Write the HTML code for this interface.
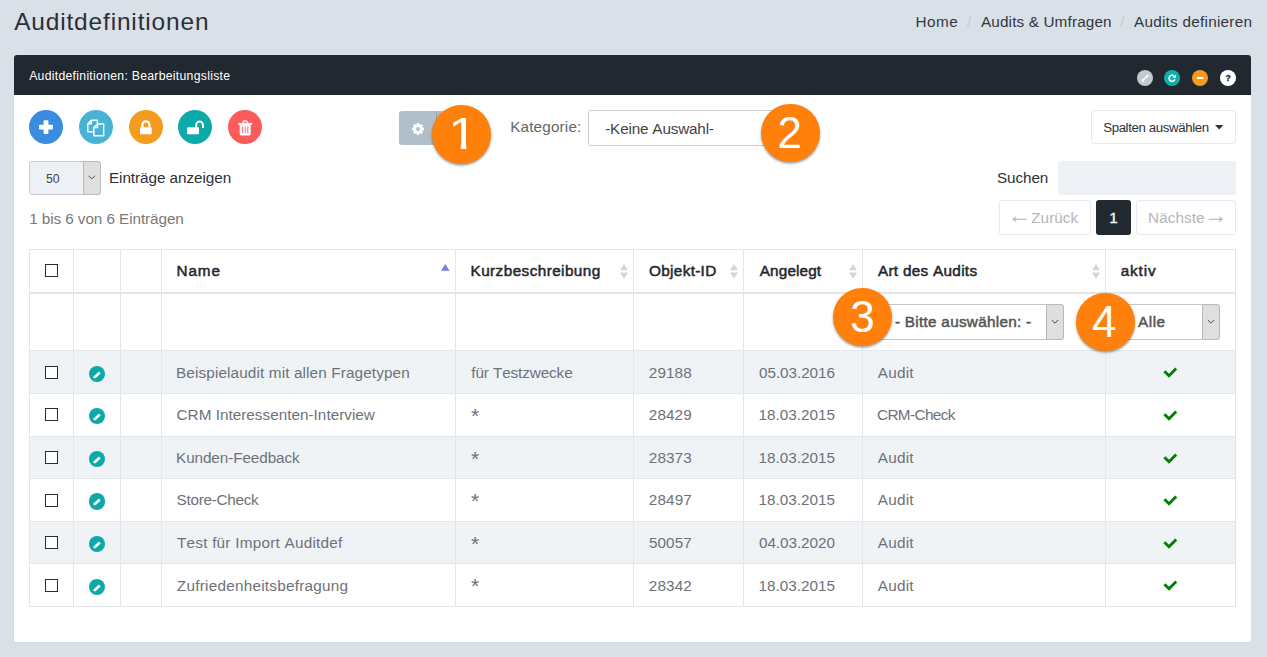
<!DOCTYPE html>
<html lang="de">
<head>
<meta charset="utf-8">
<title>Auditdefinitionen</title>
<style>
*{box-sizing:border-box;margin:0;padding:0}
html,body{width:1267px;height:657px;overflow:hidden}
body{background:#dae0e8;font-family:"Liberation Sans",sans-serif;font-size:15px;color:#333;position:relative}
.abs{position:absolute;white-space:nowrap;font-weight:400;font-kerning:none}
.page-title{color:#2b2f37}
.breadcrumb{position:absolute;left:0;top:0;width:1267px;height:45px;color:#33373e;list-style:none}
.breadcrumb .sep{color:#c2c9d3}
.portlet{position:absolute;left:14px;top:55px;width:1237px;height:587px;background:#fff;border-radius:3px}
.portlet-heading{position:absolute;left:0;top:0;width:1237px;height:39.5px;background:#222830;border-radius:3px 3px 0 0;color:#fff}
.pw{position:absolute;top:14.7px;width:16.2px;height:16.2px;border-radius:50%}
.cbtn{position:absolute;top:55px;width:34px;height:34px;border-radius:50%}
svg{position:absolute;left:0;top:0;overflow:visible}
.num{position:absolute;width:58.4px;height:58.4px;border-radius:50%;background:#ff800a;color:#fff;box-shadow:0 1.5px 2.5px rgba(0,0,0,.4);z-index:5}
.gearbtn{position:absolute;left:385px;top:56px;width:62px;height:34px;background:#b1bfca;border-radius:3px}
.gearbtn i{position:absolute;left:37px;top:0;width:1px;height:34px;background:#93a3b0}
.selbox{position:absolute;background:#fff;border:1px solid #ccc;border-radius:3px}
.ddbtn{position:absolute;background:#dfdfdf;border:1px solid #b9b9b9;border-radius:0 3px 3px 0}
.btn{position:absolute;background:#fff;border:1px solid #e6e8eb;border-radius:3px}
.search{position:absolute;left:1044px;top:106px;width:178px;height:33.5px;background:#edf0f5;border-radius:3px}
.lensel{position:absolute;left:15px;top:106px;width:71.5px;height:33.5px;background:#edf0f5;border:1px solid #c8ccd2;border-radius:3px}
.pg1{position:absolute;left:1082px;top:145px;width:35px;height:35px;background:#222830;border-radius:3px;color:#fff}
table.dt{position:absolute;left:15px;top:194px;border-collapse:separate;border-spacing:0;table-layout:fixed;width:1207px;border-right:1px solid #e3e6ea;border-bottom:1px solid #e3e6ea}
table.dt th,table.dt td{border-left:1px solid #e3e6ea;border-top:1px solid #e3e6ea;position:relative;padding:0;text-align:left;font-weight:400}
table.dt thead tr.h th{height:43px;color:#23272e}
table.dt thead tr.f th{height:58.4px;border-top:2px solid #e1e6ec}
table.dt tbody td{height:42.6px;color:#6d727a}
table.dt tbody tr.odd td{background:#f0f3f5}
.cb{position:absolute;left:15px;width:13px;height:13px;border:1px solid #2b2b2b;background:#fff}
.ed{position:absolute;left:15px;width:16.2px;height:16.2px;border-radius:50%;background:#0da8a8}
</style>
</head>
<body>
<h1 class="abs page-title" style="left:14.15px;top:6.82px;font-size:24.48px;line-height:30px;letter-spacing:0.839px;">Auditdefinitionen</h1>
<ol class="breadcrumb"><li><span class="abs" style="left:915.54px;top:12.00px;font-size:15.3px;line-height:20px;letter-spacing:0.441px;">Home</span></li><li><span class="abs sep" style="left:967.00px;top:12.00px;font-size:15.3px;line-height:20px;letter-spacing:0px;">/</span><span class="abs" style="left:980.97px;top:12.00px;font-size:15.3px;line-height:20px;letter-spacing:0.139px;">Audits &amp; Umfragen</span></li><li><span class="abs sep" style="left:1120.00px;top:12.00px;font-size:15.3px;line-height:20px;letter-spacing:0px;">/</span><span class="abs" style="left:1133.97px;top:12.00px;font-size:15.3px;line-height:20px;letter-spacing:0.253px;">Audits definieren</span></li></ol>
<section class="portlet">
<header class="portlet-heading"><h3 class="abs" style="left:15.18px;top:10.76px;font-size:12.24px;line-height:20px;letter-spacing:0.279px;">Auditdefinitionen: Bearbeitungsliste</h3><a class="pw" style="left:1122.9px;background:#c2c9d0"><svg width="16.2" height="16.2" viewBox="0 0 16.2 16.2" style=""><path d="M5.400 10.800L10.800 5.400" stroke="#fff" stroke-width="1.400"/><path d="M8.500 4.800h2.900v2.900zM4.800 8.500v2.900h2.900z" fill="#fff"/></svg></a><a class="pw" style="left:1149.9px;background:#0fb0ac"><svg width="16.2" height="16.2" viewBox="0 0 16.2 16.2" style=""><path d="M10.900 9.200a3 3 0 1 1-.9-3.200" fill="none" stroke="#fff" stroke-width="1.600"/><path d="M11.900 4.400v3.400h-3.400z" fill="#fff"/></svg></a><a class="pw" style="left:1177.9px;background:#f39c1f"><svg width="16.2" height="16.2" viewBox="0 0 16.2 16.2" style=""><rect x="4.800" y="7.100" width="6.600" height="2" rx=".6" fill="#fff"/></svg></a><a class="pw" style="left:1205.9px;background:#fff"><span class="abs" style="left:0;width:16.2px;text-align:center;top:0;line-height:16.2px;font-size:8.5px;font-weight:700;color:#1b2027;-webkit-text-stroke:.3px">?</span></a></header>
<div class="toolbar"><a class="cbtn" title="Neu" style="left:15px;background:#3a8ce0"><svg width="34" height="34" viewBox="0 0 34 34" style=""><path d="M15.4 10.3h3.200a.8.8 0 0 1 .8.8v3.700h3.800a.8.8 0 0 1 .8.8v3.200a.8.8 0 0 1-.8.8h-3.800v3.700a.8.8 0 0 1-.8.8h-3.200a.8.8 0 0 1-.8-.8v-3.700h-3.800a.8.8 0 0 1-.8-.8v-3.200a.8.8 0 0 1 .8-.8h3.800v-3.700a.8.8 0 0 1 .8-.8z" fill="#fff"/></svg></a><a class="cbtn" title="Kopieren" style="left:65px;background:#49b3d7"><svg width="34" height="34" viewBox="0 0 34 34" style=""><g fill="none" stroke="#fff" stroke-width="1.400" stroke-linejoin="round"><path d="M12.400 10.200h6v11.600h-9.600v-8z"/><path d="M12.400 10.200v3.600h-3.600"/><path d="M18.500 14h6.200v11.800h-9.800v-8.200z" fill="#49b3d7"/><path d="M18.500 14v3.600h-3.600"/></g></svg></a><a class="cbtn" title="Sperren" style="left:115px;background:#f39c1f"><svg width="34" height="34" viewBox="0 0 34 34" style=""><rect x="11" y="17.300" width="11.700" height="7" rx=".8" fill="#fff"/><path d="M13.400 17.600v-2.800a3.500 3.500 0 0 1 7 0v2.800" fill="none" stroke="#fff" stroke-width="2.2"/></svg></a><a class="cbtn" title="Entsperren" style="left:164px;background:#0daaa9"><svg width="34" height="34" viewBox="0 0 34 34" style=""><rect x="9.100" y="17.300" width="11.900" height="7" rx=".8" fill="#fff"/><path d="M18.200 17.600v-2.600a3.400 3.400 0 0 1 6.800 0v3" fill="none" stroke="#fff" stroke-width="2"/></svg></a><a class="cbtn" title="Löschen" style="left:214px;background:#fb5b5b"><svg width="34" height="34" viewBox="0 0 34 34" style=""><path d="M10.700 13.300h13v1.300h-13z M15 13.300v-1.600a.9.9 0 0 1 .9-.9h2.600a.9.9 0 0 1 .9.9v1.600" fill="#fff" stroke="#fff" stroke-width=".9" stroke-linejoin="round"/><path d="M11.700 14.600h11v9.400a1.400 1.400 0 0 1-1.400 1.400h-8.200a1.400 1.400 0 0 1-1.400-1.400z" fill="#fff"/><g stroke="#fb5b5b" stroke-width=".9"><path d="M14.600 16.300v7M17.200 16.300v7M19.800 16.300v7"/></g><rect x="15.900" y="11.600" width="2.600" height="1.300" fill="#fb5b5b"/></svg></a><div class="gearbtn"><svg width="62" height="34" viewBox="0 0 62 34" style=""><path d="M24.99 16.86 L24.99 19.14 L23.75 19.14 L23.16 20.55 L24.05 21.43 L22.43 23.05 L21.55 22.16 L20.14 22.75 L20.14 23.99 L17.86 23.99 L17.86 22.75 L16.45 22.16 L15.57 23.05 L13.95 21.43 L14.84 20.55 L14.25 19.14 L13.01 19.14 L13.01 16.86 L14.25 16.86 L14.84 15.45 L13.95 14.57 L15.57 12.95 L16.45 13.84 L17.86 13.25 L17.86 12.01 L20.14 12.01 L20.14 13.25 L21.55 13.84 L22.43 12.95 L24.05 14.57 L23.16 15.45 L23.75 16.86Z" fill="#fff"/><circle cx="19" cy="18" r="2.01" fill="#b1bfca"/></svg><i></i></div><label><span class="abs" style="left:496.14px;top:61.70px;font-size:15.3px;line-height:20px;letter-spacing:0.167px;color:#666;">Kategorie:</span></label><div class="selbox" style="left:574px;top:55px;width:215px;height:36px"><span class="abs" style="left:16.22px;top:8.40px;font-size:15.3px;line-height:20px;letter-spacing:-0.189px;color:#444;">-Keine Auswahl-</span></div><div class="btn" style="left:1077px;top:55px;width:145px;height:34px"><span class="abs" style="left:11.20px;top:7.11px;font-size:13.26px;line-height:20px;letter-spacing:-0.381px;color:#2d3138;">Spalten auswählen</span><svg width="9" height="5" viewBox="0 0 9 5" style="left:122.79999999999995px;top:13.799999999999997px"><path d="M0 0h8.400L4.200 4.500z" fill="#2d3138"/></svg></div></div>
<div class="lensel"><span class="abs" style="left:16.01px;top:6.76px;font-size:12.24px;line-height:20px;letter-spacing:0.054px;color:#444;">50</span><span class="ddbtn" style="left:53px;top:-1px;width:17.5px;height:33.5px"><svg width="15.5" height="31.5" viewBox="0 0 15.5 31.5" style=""><path d="M4.5 13.8L7.8 16.9L10.9 13.8" fill="none" stroke="#4a4a4a" stroke-width="1"/></svg></span></div><label class="abs" style="left:94.94px;top:113.20px;font-size:15.3px;line-height:20px;letter-spacing:-0.062px;color:#2d3138;">Einträge anzeigen</label><label class="abs" style="left:983.01px;top:113.00px;font-size:15.3px;line-height:20px;letter-spacing:-0.101px;color:#2d3138;">Suchen</label><div class="search"></div>
<div class="abs" style="left:15.23px;top:153.60px;font-size:15.3px;line-height:20px;letter-spacing:-0.084px;color:#797979;">1 bis 6 von 6 Einträgen</div><div class="btn" style="left:985px;top:145px;width:91.5px;height:34.5px"><span class="abs" style="left:7.57px;top:3.90px;font-size:23.664px;line-height:20px;letter-spacing:0px;color:#b5b5b5;">←</span><span class="abs" style="left:31.21px;top:6.60px;font-size:15.3px;line-height:20px;letter-spacing:0.041px;color:#b5b5b5;">Zurück</span></div><div class="pg1"><span class="abs" style="left:13.33px;top:7.60px;font-size:15.3px;line-height:20px;letter-spacing:0px;color:#fff;-webkit-text-stroke:.3px;">1</span></div><div class="btn" style="left:1122px;top:145px;width:100px;height:34.5px"><span class="abs" style="left:11.04px;top:6.60px;font-size:15.3px;line-height:20px;letter-spacing:0.068px;color:#b5b5b5;">Nächste</span><span class="abs" style="left:66.87px;top:3.90px;font-size:23.664px;line-height:20px;letter-spacing:0px;color:#b5b5b5;">→</span></div>
<div class="num" style="left:418.3px;top:50.2px"><span class="abs" style="left:18.55px;top:3.75px;font-size:44px;line-height:50px;clip-path:polygon(0 0,25px 0,25px 35.4px,15.3px 35.4px,15.3px 41px,10.700px 41px,10.700px 35.4px,0 35.4px);transform:scaleX(1.2);transform-origin:15.2px 0">1</span></div><div class="num" style="left:747.4px;top:49.0px"><span class="abs" style="left:16.16px;top:3.95px;font-size:44px;line-height:50px">2</span></div><div class="num" style="left:819.3px;top:232.9px"><span class="abs" style="left:16.84px;top:4.15px;font-size:44px;line-height:50px">3</span></div><div class="num" style="left:1062.4px;top:238.1px"><span class="abs" style="left:15.70px;top:3.45px;font-size:44px;line-height:50px">4</span></div>
<table class="dt"><colgroup><col style="width:44px"><col style="width:47px"><col style="width:41px"><col style="width:294px"><col style="width:178px"><col style="width:110px"><col style="width:119px"><col style="width:243px"><col style="width:130px"></colgroup>
<thead><tr class="h"><th><span class="cb" style="top:14px"></span></th><th></th><th></th><th><span class="abs" style="left:14.44px;top:11.40px;font-size:15.3px;line-height:20px;letter-spacing:0.941px;-webkit-text-stroke:.5px;">Name</span><svg width="9" height="7" viewBox="0 0 9 7" style="left:279px;top:14.399999999999977px"><path d="M4.300 0L8.600 6.800H0z" fill="#7b7fd8"/></svg></th><th><span class="abs" style="left:14.54px;top:11.40px;font-size:15.3px;line-height:20px;letter-spacing:0.428px;-webkit-text-stroke:.5px;">Kurzbeschreibung</span><svg width="8" height="15" viewBox="0 0 8 15" style="left:163.5px;top:14.199999999999989px"><path d="M4 0L8 6.300H0z" fill="#d3d5d8"/><path d="M0 8.500h8L4 14.800z" fill="#d3d5d8"/></svg></th><th><span class="abs" style="left:15.08px;top:11.40px;font-size:15.3px;line-height:20px;letter-spacing:0.318px;-webkit-text-stroke:.5px;">Objekt-ID</span><svg width="8" height="15" viewBox="0 0 8 15" style="left:95.5px;top:14.199999999999989px"><path d="M4 0L8 6.300H0z" fill="#d3d5d8"/><path d="M0 8.500h8L4 14.800z" fill="#d3d5d8"/></svg></th><th><span class="abs" style="left:15.77px;top:11.40px;font-size:15.3px;line-height:20px;letter-spacing:0.134px;-webkit-text-stroke:.5px;">Angelegt</span><svg width="8" height="15" viewBox="0 0 8 15" style="left:104.5px;top:14.199999999999989px"><path d="M4 0L8 6.300H0z" fill="#d3d5d8"/><path d="M0 8.500h8L4 14.800z" fill="#d3d5d8"/></svg></th><th><span class="abs" style="left:14.97px;top:11.40px;font-size:15.3px;line-height:20px;letter-spacing:0.295px;-webkit-text-stroke:.5px;">Art des Audits</span><svg width="8" height="15" viewBox="0 0 8 15" style="left:228.5px;top:14.199999999999989px"><path d="M4 0L8 6.300H0z" fill="#d3d5d8"/><path d="M0 8.500h8L4 14.800z" fill="#d3d5d8"/></svg></th><th><span class="abs" style="left:14.65px;top:11.40px;font-size:15.3px;line-height:20px;letter-spacing:0.886px;-webkit-text-stroke:.5px;">aktiv</span></th></tr>
<tr class="f"><th></th><th></th><th></th><th></th><th></th><th></th><th></th><th><div class="selbox" style="left:10px;top:10px;width:191px;height:36px;border-color:#c6c6c6"><span class="abs" style="left:20.92px;top:7.30px;font-size:15.3px;line-height:20px;letter-spacing:0.279px;-webkit-text-stroke:.5px;color:#555;">- Bitte auswählen: -</span><span class="ddbtn" style="left:172px;top:-1px;width:18px;height:36px"><svg width="16" height="34" viewBox="0 0 16 34" style=""><path d="M4.8 15.0L8.0 18.2L11.2 15.0" fill="none" stroke="#4a4a4a" stroke-width="1"/></svg></span></div></th><th><div class="selbox" style="left:14px;top:10px;width:100px;height:36px;border-color:#c6c6c6"><span class="abs" style="left:16.97px;top:7.30px;font-size:15.3px;line-height:20px;letter-spacing:0.532px;-webkit-text-stroke:.5px;color:#555;">Alle</span><span class="ddbtn" style="left:81px;top:-1px;width:18px;height:36px"><svg width="16" height="34" viewBox="0 0 16 34" style=""><path d="M4.8 15.0L8.0 18.2L11.2 15.0" fill="none" stroke="#4a4a4a" stroke-width="1"/></svg></span></div></th></tr></thead>
<tbody><tr class="odd"><td><span class="cb" style="top:14.5px"></span></td><td><a class="ed" style="left:14.8px;top:14.3px"><svg width="16.2" height="16.2" viewBox="0 0 16.2 16.2" style=""><path d="M5.300 11.400L10.800 6.400" stroke="#fff" stroke-width="2.700"/><path d="M4.400 12.300l.4-2 1.600 1.700z" fill="#fff"/></svg></a></td><td></td><td><span class="abs" style="left:14.04px;top:11.30px;font-size:15.3px;line-height:20px;letter-spacing:0.125px;">Beispielaudit mit allen Fragetypen</span></td><td><span class="abs" style="left:15.28px;top:11.30px;font-size:15.3px;line-height:20px;letter-spacing:-0.114px;">für Testzwecke</span></td><td><span class="abs" style="left:14.83px;top:11.30px;font-size:15.3px;line-height:20px;letter-spacing:0.072px;">29188</span></td><td><span class="abs" style="left:15.00px;top:11.30px;font-size:15.3px;line-height:20px;letter-spacing:-0.067px;">05.03.2016</span></td><td><span class="abs" style="left:14.77px;top:11.30px;font-size:15.3px;line-height:20px;letter-spacing:0.242px;">Audit</span></td><td><svg width="16" height="12" viewBox="0 0 16 12" style="left:57.4px;top:15.0px"><path d="M1.400 5.300L6 9.800L13.200 2.400" fill="none" stroke="#008000" stroke-width="2.900"/></svg></td></tr>
<tr class="even"><td><span class="cb" style="top:14.5px"></span></td><td><a class="ed" style="left:14.8px;top:14.3px"><svg width="16.2" height="16.2" viewBox="0 0 16.2 16.2" style=""><path d="M5.300 11.400L10.800 6.400" stroke="#fff" stroke-width="2.700"/><path d="M4.400 12.300l.4-2 1.600 1.700z" fill="#fff"/></svg></a></td><td></td><td><span class="abs" style="left:14.52px;top:11.30px;font-size:15.3px;line-height:20px;letter-spacing:0.012px;">CRM Interessenten-Interview</span></td><td><span class="abs" style="left:14.96px;top:12.12px;font-size:21.012px;line-height:20px;letter-spacing:0px;">*</span></td><td><span class="abs" style="left:14.83px;top:11.30px;font-size:15.3px;line-height:20px;letter-spacing:0.087px;">28429</span></td><td><span class="abs" style="left:14.43px;top:11.30px;font-size:15.3px;line-height:20px;letter-spacing:-0.007px;">18.03.2015</span></td><td><span class="abs" style="left:14.02px;top:11.30px;font-size:15.3px;line-height:20px;letter-spacing:-0.619px;">CRM-Check</span></td><td><svg width="16" height="12" viewBox="0 0 16 12" style="left:57.4px;top:15.0px"><path d="M1.400 5.300L6 9.800L13.200 2.400" fill="none" stroke="#008000" stroke-width="2.900"/></svg></td></tr>
<tr class="odd"><td><span class="cb" style="top:14.5px"></span></td><td><a class="ed" style="left:14.8px;top:14.3px"><svg width="16.2" height="16.2" viewBox="0 0 16.2 16.2" style=""><path d="M5.300 11.400L10.800 6.400" stroke="#fff" stroke-width="2.700"/><path d="M4.400 12.300l.4-2 1.600 1.700z" fill="#fff"/></svg></a></td><td></td><td><span class="abs" style="left:14.04px;top:11.30px;font-size:15.3px;line-height:20px;letter-spacing:-0.1px;">Kunden-Feedback</span></td><td><span class="abs" style="left:14.96px;top:12.12px;font-size:21.012px;line-height:20px;letter-spacing:0px;">*</span></td><td><span class="abs" style="left:14.83px;top:11.30px;font-size:15.3px;line-height:20px;letter-spacing:0.074px;">28373</span></td><td><span class="abs" style="left:14.43px;top:11.30px;font-size:15.3px;line-height:20px;letter-spacing:-0.007px;">18.03.2015</span></td><td><span class="abs" style="left:14.77px;top:11.30px;font-size:15.3px;line-height:20px;letter-spacing:0.242px;">Audit</span></td><td><svg width="16" height="12" viewBox="0 0 16 12" style="left:57.4px;top:15.0px"><path d="M1.400 5.300L6 9.800L13.200 2.400" fill="none" stroke="#008000" stroke-width="2.900"/></svg></td></tr>
<tr class="even"><td><span class="cb" style="top:14.5px"></span></td><td><a class="ed" style="left:14.8px;top:14.3px"><svg width="16.2" height="16.2" viewBox="0 0 16.2 16.2" style=""><path d="M5.300 11.400L10.800 6.400" stroke="#fff" stroke-width="2.700"/><path d="M4.400 12.300l.4-2 1.600 1.700z" fill="#fff"/></svg></a></td><td></td><td><span class="abs" style="left:14.61px;top:11.30px;font-size:15.3px;line-height:20px;letter-spacing:-0.286px;">Store-Check</span></td><td><span class="abs" style="left:14.96px;top:12.12px;font-size:21.012px;line-height:20px;letter-spacing:0px;">*</span></td><td><span class="abs" style="left:14.83px;top:11.30px;font-size:15.3px;line-height:20px;letter-spacing:0.098px;">28497</span></td><td><span class="abs" style="left:14.43px;top:11.30px;font-size:15.3px;line-height:20px;letter-spacing:-0.007px;">18.03.2015</span></td><td><span class="abs" style="left:14.77px;top:11.30px;font-size:15.3px;line-height:20px;letter-spacing:0.242px;">Audit</span></td><td><svg width="16" height="12" viewBox="0 0 16 12" style="left:57.4px;top:15.0px"><path d="M1.400 5.300L6 9.800L13.200 2.400" fill="none" stroke="#008000" stroke-width="2.900"/></svg></td></tr>
<tr class="odd"><td><span class="cb" style="top:14.5px"></span></td><td><a class="ed" style="left:14.8px;top:14.3px"><svg width="16.2" height="16.2" viewBox="0 0 16.2 16.2" style=""><path d="M5.300 11.400L10.800 6.400" stroke="#fff" stroke-width="2.700"/><path d="M4.400 12.300l.4-2 1.600 1.700z" fill="#fff"/></svg></a></td><td></td><td><span class="abs" style="left:14.96px;top:11.30px;font-size:15.3px;line-height:20px;letter-spacing:0.237px;">Test für Import Auditdef</span></td><td><span class="abs" style="left:14.96px;top:12.12px;font-size:21.012px;line-height:20px;letter-spacing:0px;">*</span></td><td><span class="abs" style="left:14.99px;top:11.30px;font-size:15.3px;line-height:20px;letter-spacing:0.059px;">50057</span></td><td><span class="abs" style="left:15.00px;top:11.30px;font-size:15.3px;line-height:20px;letter-spacing:-0.075px;">04.03.2020</span></td><td><span class="abs" style="left:14.77px;top:11.30px;font-size:15.3px;line-height:20px;letter-spacing:0.242px;">Audit</span></td><td><svg width="16" height="12" viewBox="0 0 16 12" style="left:57.4px;top:15.0px"><path d="M1.400 5.300L6 9.800L13.200 2.400" fill="none" stroke="#008000" stroke-width="2.900"/></svg></td></tr>
<tr class="even"><td><span class="cb" style="top:14.5px"></span></td><td><a class="ed" style="left:14.8px;top:14.3px"><svg width="16.2" height="16.2" viewBox="0 0 16.2 16.2" style=""><path d="M5.300 11.400L10.800 6.400" stroke="#fff" stroke-width="2.700"/><path d="M4.400 12.300l.4-2 1.600 1.700z" fill="#fff"/></svg></a></td><td></td><td><span class="abs" style="left:14.81px;top:11.30px;font-size:15.3px;line-height:20px;letter-spacing:0.25px;">Zufriedenheitsbefragung</span></td><td><span class="abs" style="left:14.96px;top:12.12px;font-size:21.012px;line-height:20px;letter-spacing:0px;">*</span></td><td><span class="abs" style="left:14.83px;top:11.30px;font-size:15.3px;line-height:20px;letter-spacing:0.098px;">28342</span></td><td><span class="abs" style="left:14.43px;top:11.30px;font-size:15.3px;line-height:20px;letter-spacing:-0.007px;">18.03.2015</span></td><td><span class="abs" style="left:14.77px;top:11.30px;font-size:15.3px;line-height:20px;letter-spacing:0.242px;">Audit</span></td><td><svg width="16" height="12" viewBox="0 0 16 12" style="left:57.4px;top:15.0px"><path d="M1.400 5.300L6 9.800L13.200 2.400" fill="none" stroke="#008000" stroke-width="2.900"/></svg></td></tr>
</tbody></table>
</section>
</body>
</html>
